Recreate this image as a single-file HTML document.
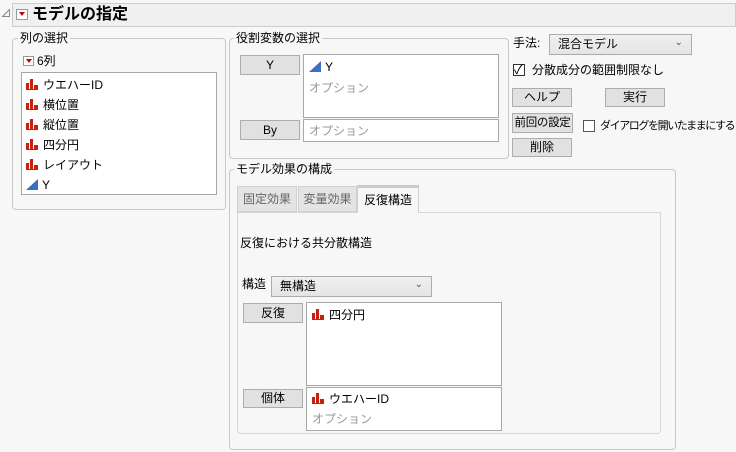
<html><head><style>
body{margin:0;width:736px;height:452px;background:#f7f7f7;font-family:"Liberation Sans","Noto Sans CJK JP",sans-serif;font-size:12px;color:#000;position:relative;overflow:hidden}
.a{position:absolute;white-space:nowrap}
.grp{position:absolute;border:1px solid #c8c8c8;border-radius:4px}
.lbl{position:absolute;background:#f7f7f7;padding:0 2px;font-size:12px;line-height:14px;white-space:nowrap}
.btn{position:absolute;background:#e1e1e1;border:1px solid #adadad;text-align:center;font-size:12px;box-sizing:border-box;white-space:nowrap;overflow:hidden}
.box{position:absolute;background:#fff;border:1px solid #a8a8a8;box-sizing:border-box;white-space:nowrap}
.opt{color:#999}
.bar{display:inline-block;width:12px;height:11px;vertical-align:-1px;margin-right:5px}
.tri{display:inline-block;width:0;height:0;border-left:12px solid transparent;border-bottom:11px solid #3b6fc4;vertical-align:-1px;margin-right:4px}
.rd{position:absolute;width:11px;height:10px;background:#fff;border:1px solid #999;box-sizing:border-box}
.rd:after{content:"";position:absolute;left:2px;top:2px;border-left:3px solid transparent;border-right:3px solid transparent;border-top:4px solid #c00}
.dd{position:absolute;background:linear-gradient(#f0f0f0,#e4e4e4);border:1px solid #acacac;box-sizing:border-box;padding-left:8px}
.dd:after{content:"⌄";position:absolute;right:8px;top:-2px;font-size:10px;color:#555}
.cb{position:absolute;width:12px;height:12px;border:1px solid #333;background:#fff;box-sizing:border-box}
</style></head><body>
<svg width="0" height="0" style="position:absolute"><defs><symbol id="b" viewBox="0 0 12 11"><rect x="0" y="4" width="3" height="7" fill="#c8200e"/><rect x="4" y="0" width="3" height="11" fill="#c8200e"/><rect x="8" y="6" width="4" height="5" fill="#c8200e"/><rect x="0" y="10" width="12" height="1" fill="#c8200e"/></symbol></defs></svg>

<svg class="a" style="left:1px;top:8px" width="10" height="10"><path d="M8.5 1.5 L8.5 8.5 L1.5 8.5 Z" fill="none" stroke="#888"/></svg>
<div class="a" style="left:12px;top:3px;width:724px;height:24px;background:#f0f0f0;border:1px solid #cdcdcd;box-sizing:border-box"></div>
<div class="rd" style="left:16px;top:9px;width:12px;height:11px"></div>
<div class="a" style="left:32px;top:5px;font-size:16px;font-weight:bold;line-height:20px">モデルの指定</div>

<div class="grp" style="left:12px;top:38px;width:212px;height:170px"></div>
<div class="lbl" style="left:18px;top:31px">列の選択</div>
<div class="rd" style="left:23px;top:56px"></div>
<div class="a" style="left:37px;top:54px;line-height:14px">6列</div>
<div class="box" style="left:21px;top:72px;width:196px;height:123px;line-height:20px;padding:2px 0 0 4px">
<div><svg class="bar"><use href="#b"/></svg>ウエハーID</div>
<div><svg class="bar"><use href="#b"/></svg>横位置</div>
<div><svg class="bar"><use href="#b"/></svg>縦位置</div>
<div><svg class="bar"><use href="#b"/></svg>四分円</div>
<div><svg class="bar"><use href="#b"/></svg>レイアウト</div>
<div><span class="tri"></span>Y</div>
</div>

<div class="grp" style="left:229px;top:38px;width:278px;height:119px"></div>
<div class="lbl" style="left:234px;top:31px">役割変数の選択</div>
<div class="btn" style="left:240px;top:55px;width:60px;height:20px;line-height:18px">Y</div>
<div class="box" style="left:303px;top:54px;width:196px;height:64px;padding:2px 5px;line-height:21px"><div><span class="tri"></span>Y</div><div class="opt">オプション</div></div>
<div class="btn" style="left:240px;top:120px;width:60px;height:20px;line-height:18px">By</div>
<div class="box" style="left:303px;top:119px;width:196px;height:23px;padding:2px 5px;line-height:18px" ><span class="opt">オプション</span></div>

<div class="a" style="left:513px;top:36px;line-height:14px">手法:</div>
<div class="dd" style="left:549px;top:34px;width:143px;height:21px;line-height:19px">混合モデル</div>
<div class="cb" style="left:513px;top:64px"></div>
<div class="a" style="left:514px;top:59px;font-size:13px">✓</div>
<div class="a" style="left:532px;top:63px;line-height:14px">分散成分の範囲制限なし</div>
<div class="btn" style="left:512px;top:88px;width:60px;height:19px;line-height:17px">ヘルプ</div>
<div class="btn" style="left:605px;top:88px;width:60px;height:19px;line-height:17px">実行</div>
<div class="btn" style="left:512px;top:113px;width:61px;height:20px;line-height:18px;font-size:11.5px;letter-spacing:-0.3px">前回の設定</div>
<div class="cb" style="left:583px;top:120px;border-color:#555"></div>
<div class="a" style="left:600px;top:119px;line-height:14px;font-size:11px;letter-spacing:-1.4px">ダイアログを開いたままにする</div>
<div class="btn" style="left:512px;top:138px;width:60px;height:19px;line-height:17px">削除</div>

<div class="grp" style="left:229px;top:169px;width:445px;height:279px"></div>
<div class="lbl" style="left:234px;top:162px">モデル効果の構成</div>
<div class="a" style="left:237px;top:212px;width:424px;height:222px;border:1px solid #d6d6d6;border-radius:0 0 4px 4px;background:#f7f7f7;box-sizing:border-box"></div>
<div class="a" style="left:237px;top:186px;width:60px;height:26px;background:#e4e4e4;border:1px solid #d0d0d0;box-sizing:border-box;color:#666;text-align:center;line-height:24px">固定効果</div>
<div class="a" style="left:298px;top:186px;width:59px;height:26px;background:#e4e4e4;border:1px solid #d0d0d0;box-sizing:border-box;color:#666;text-align:center;line-height:24px">変量効果</div>
<div class="a" style="left:357px;top:185px;width:62px;height:28px;background:#f7f7f7;border:1px solid #d0d0d0;border-top:3px solid #ccc;border-bottom:none;box-sizing:border-box;text-align:center;line-height:24px">反復構造</div>
<div class="a" style="left:240px;top:236px;line-height:14px">反復における共分散構造</div>
<div class="a" style="left:242px;top:277px;line-height:14px">構造</div>
<div class="dd" style="left:271px;top:276px;width:161px;height:21px;line-height:19px">無構造</div>
<div class="btn" style="left:243px;top:303px;width:60px;height:20px;line-height:18px">反復</div>
<div class="box" style="left:306px;top:302px;width:196px;height:84px;padding:2px 5px;line-height:20px"><svg class="bar"><use href="#b"/></svg>四分円</div>
<div class="btn" style="left:243px;top:389px;width:60px;height:19px;line-height:17px">個体</div>
<div class="box" style="left:306px;top:387px;width:196px;height:44px;padding:1px 5px;line-height:20px"><div><svg class="bar"><use href="#b"/></svg>ウエハーID</div><div class="opt">オプション</div></div>
</body></html>
